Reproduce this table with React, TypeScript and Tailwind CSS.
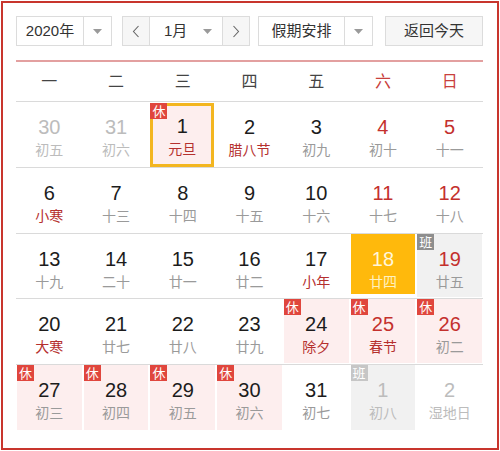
import React from "react";

type Cell = {
  n: string;
  l: string;
  other?: boolean;
  weekend?: boolean;
  fest?: boolean;
  badge?: "休" | "班";
  bg?: "pink" | "gray";
  today?: boolean;
  selected?: boolean;
};

const rows: { h: string; cells: Cell[] }[] = [
  {
    h: "h-[66px]",
    cells: [
      { n: "30", l: "初五", other: true },
      { n: "31", l: "初六", other: true },
      { n: "1", l: "元旦", fest: true, badge: "休", bg: "pink", selected: true },
      { n: "2", l: "腊八节", fest: true },
      { n: "3", l: "初九" },
      { n: "4", l: "初十", weekend: true },
      { n: "5", l: "十一", weekend: true },
    ],
  },
  {
    h: "h-[66px]",
    cells: [
      { n: "6", l: "小寒", fest: true },
      { n: "7", l: "十三" },
      { n: "8", l: "十四" },
      { n: "9", l: "十五" },
      { n: "10", l: "十六" },
      { n: "11", l: "十七", weekend: true },
      { n: "12", l: "十八", weekend: true },
    ],
  },
  {
    h: "h-[65px]",
    cells: [
      { n: "13", l: "十九" },
      { n: "14", l: "二十" },
      { n: "15", l: "廿一" },
      { n: "16", l: "廿二" },
      { n: "17", l: "小年", fest: true },
      { n: "18", l: "廿四", today: true },
      { n: "19", l: "廿五", weekend: true, badge: "班", bg: "gray" },
    ],
  },
  {
    h: "h-[66px]",
    cells: [
      { n: "20", l: "大寒", fest: true },
      { n: "21", l: "廿七" },
      { n: "22", l: "廿八" },
      { n: "23", l: "廿九" },
      { n: "24", l: "除夕", fest: true, badge: "休", bg: "pink" },
      { n: "25", l: "春节", fest: true, weekend: true, badge: "休", bg: "pink" },
      { n: "26", l: "初二", weekend: true, badge: "休", bg: "pink" },
    ],
  },
  {
    h: "h-[66px]",
    cells: [
      { n: "27", l: "初三", badge: "休", bg: "pink" },
      { n: "28", l: "初四", badge: "休", bg: "pink" },
      { n: "29", l: "初五", badge: "休", bg: "pink" },
      { n: "30", l: "初六", badge: "休", bg: "pink" },
      { n: "31", l: "初七" },
      { n: "1", l: "初八", other: true, badge: "班", bg: "gray" },
      { n: "2", l: "湿地日", other: true },
    ],
  },
];

const font = { fontFamily: '"Liberation Sans", Arial, "Noto Sans CJK SC", sans-serif' };

function Caret() {
  return (
    <svg width="9" height="5" viewBox="0 0 9 5">
      <polygon points="0,0 9,0 4.5,5" fill="#9a9a9a" />
    </svg>
  );
}

function Chevron({ dir }: { dir: "l" | "r" }) {
  return (
    <svg width="8" height="13" viewBox="0 0 8 13">
      <polyline
        points={dir === "l" ? "6.5,1 1.5,6.5 6.5,12" : "1.5,1 6.5,6.5 1.5,12"}
        fill="none"
        stroke="#666"
        strokeWidth="1.1"
      />
    </svg>
  );
}

function DayCell({ c }: { c: Cell }) {
  const numColor = c.other
    ? "text-[#bcbcbc]"
    : c.today
    ? "text-[#fff6dc]"
    : c.weekend
    ? "text-[#c4302d]"
    : "text-[#1c1c1c]";
  const lunarColor = c.other
    ? "text-[#bcbcbc]"
    : c.today
    ? "text-[#fff1c0]"
    : c.fest
    ? "text-[#b5302e]"
    : "text-[#9a9a9a]";
  let box = "mx-px mb-px h-full";
  if (c.bg === "pink") box += " bg-[#fdeeee]";
  if (c.bg === "gray") box += " bg-[#f1f1f1]";
  if (c.today) box = "mx-px mb-[4px] h-full bg-[#ffb90c]";
  if (c.selected) box = "mt-px ml-px mr-[2px] mb-0 h-full bg-[#fdeeee] border-[3px] border-[#f3b620]";
  const badgeBg =
    c.badge === "休" ? "bg-[#e0463d]" : c.other ? "bg-[#c6c6c6]" : "bg-[#8e8e8e]";
  return (
    <div className="flex flex-col">
      <div className={"relative flex flex-col items-center " + box}>
        {c.badge && (
          <div
            className={
              "absolute w-[17px] h-[16px] flex items-center justify-center text-white text-[13px] leading-none " +
              badgeBg +
              (c.selected ? " -left-[3px] -top-[3px]" : " left-0 top-0")
            }
          >
            {c.badge}
          </div>
        )}
        <div
          className={
            "text-[20px] leading-[22px] " + numColor + (c.selected ? " pt-[9px]" : " pt-[14px]")
          }
        >
          {c.n}
        </div>
        <div className={"mt-[3px] text-[14px] leading-[18px] " + lunarColor}>{c.l}</div>
      </div>
    </div>
  );
}

export default function App() {
  const weekdays = ["一", "二", "三", "四", "五", "六", "日"];
  return (
    <div className="w-[500px] h-[451px] bg-white p-px" style={font}>
      <div className="h-full border-2 border-[#c8352d] pl-[13px] pr-[14px] pt-[13px]">
        {/* controls */}
        <div className="flex h-[30px] text-[15px] text-[#333]">
          <div className="flex w-[96px] border border-[#dcdcdc] bg-white">
            <div className="w-[66px] flex items-center justify-center">2020年</div>
            <div className="flex-1 border-l border-[#dcdcdc] flex items-center justify-center">
              <Caret />
            </div>
          </div>
          <div className="ml-[10px] flex w-[128px] border border-[#dcdcdc]">
            <div className="w-[26px] bg-[#f6f6f6] flex items-center justify-center">
              <Chevron dir="l" />
            </div>
            <div className="w-[74px] border-l border-r border-[#dcdcdc] bg-white flex items-center">
              <span className="ml-[14px]">1月</span>
              <span className="ml-[16px] flex">
                <Caret />
              </span>
            </div>
            <div className="flex-1 bg-[#f6f6f6] flex items-center justify-center">
              <Chevron dir="r" />
            </div>
          </div>
          <div className="ml-[8px] flex w-[115px] border border-[#dcdcdc] bg-white">
            <div className="w-[85px] flex items-center justify-center">假期安排</div>
            <div className="flex-1 border-l border-[#dcdcdc] flex items-center justify-center">
              <Caret />
            </div>
          </div>
          <div className="ml-[12px] w-[98px] border border-[#dcdcdc] bg-[#f6f6f6] flex items-center justify-center">
            返回今天
          </div>
        </div>
        {/* red line */}
        <div className="mt-[14px] h-[2px] bg-[#e3a0a0]" />
        {/* weekday header */}
        <div className="grid grid-cols-7 h-[40px] border-b border-[#dadada] text-[16px]">
          {weekdays.map((w, i) => (
            <div
              key={w}
              className={
                "flex items-center justify-center " + (i >= 5 ? "text-[#c9403c]" : "text-[#444]")
              }
            >
              {w}
            </div>
          ))}
        </div>
        {/* rows */}
        {rows.map((r, ri) => (
          <div
            key={ri}
            className={
              "grid grid-cols-7 " + r.h + (ri < rows.length - 1 ? " border-b border-[#dadada]" : "")
            }
          >
            {r.cells.map((c, ci) => (
              <DayCell key={ci} c={c} />
            ))}
          </div>
        ))}
      </div>
    </div>
  );
}
